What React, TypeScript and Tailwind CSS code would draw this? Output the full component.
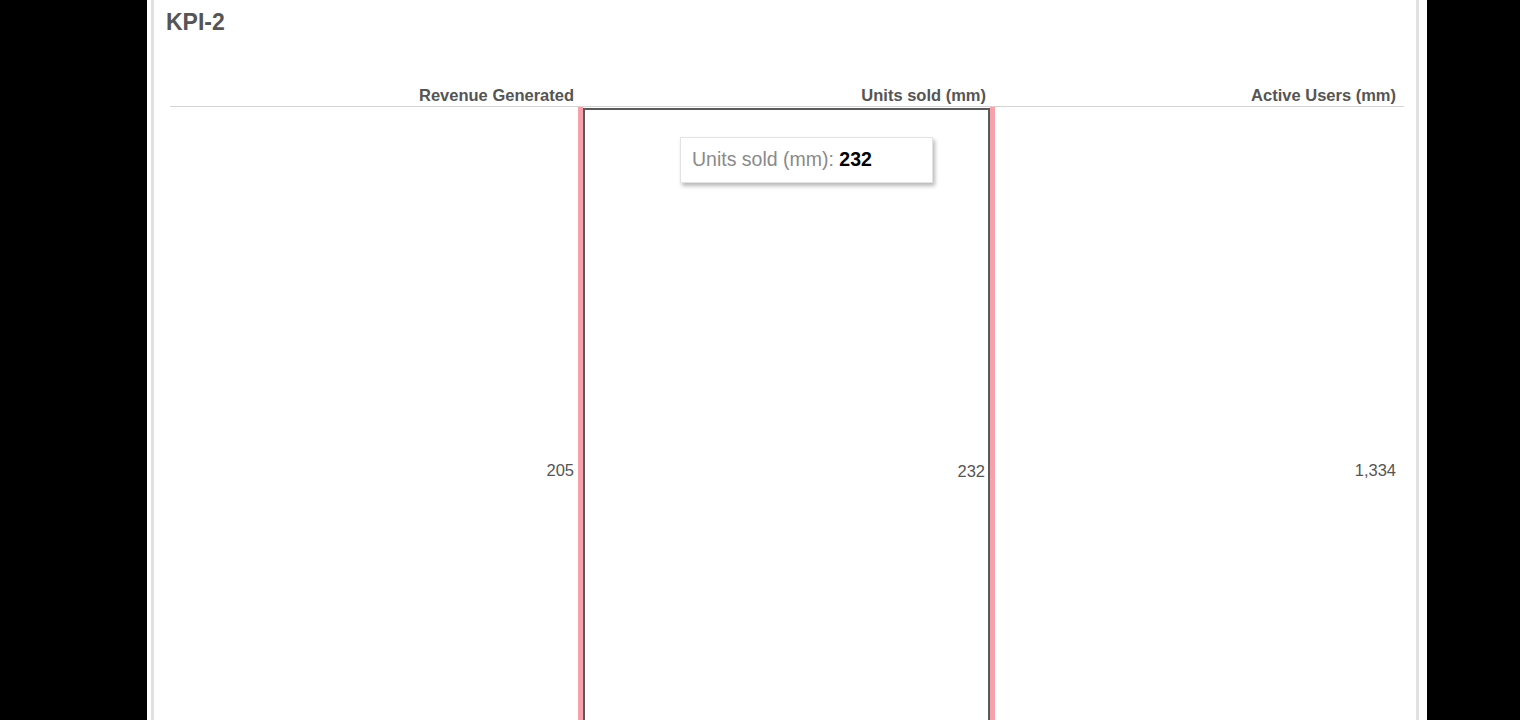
import React from "react";

const font = { fontFamily: '"Liberation Sans", Arial, sans-serif' };

export default function App() {
  return (
    <div className="w-[1520px] h-[720px] bg-black flex overflow-hidden" style={font}>
      <div className="w-[147px] shrink-0" />
      <div className="w-[1280px] shrink-0 bg-white pl-[4px] pr-[8px]">
        <div className="h-full border-x-[3px] border-[#e1e1e1] relative">
          <div className="pl-[12px] pt-[8px] h-[28px] text-[23px] leading-[28px] font-bold text-[#555]">KPI-2</div>
          <div className="ml-[16px] mr-[12px] mt-[57px]">
            {/* header row */}
            <div className="flex border-b border-[#d4d4d4] h-[22px] text-[16.5px] leading-[20px] font-bold text-[#555]">
              <div className="w-[408px] pr-[4px] text-right">Revenue Generated</div>
              <div className="w-[417px] pr-[9px] text-right">Units sold (mm)</div>
              <div className="flex-1 pr-[8px] text-right">Active Users (mm)</div>
            </div>
            {/* body row */}
            <div className="flex h-[726px] text-[16.5px] text-[#555]">
              <div className="w-[408px] pr-[4px] flex items-center justify-end">205</div>
              <div className="w-[417px] border-x-[5px] border-[#f7a1aa] pt-[1px] flex">
                <div className="flex-1 border-x-2 border-t-2 border-[#5a5a5a] pr-[3px] flex items-center justify-end">
                  232
                </div>
              </div>
              <div className="flex-1 pr-[8px] flex items-center justify-end">1,334</div>
            </div>
          </div>
          {/* tooltip */}
          <div className="absolute left-[526px] top-[137px] w-[253px] h-[46px] bg-white border border-[#e3e3e3] shadow-[2px_3px_4px_rgba(0,0,0,0.28)] flex items-center pl-[11px] text-[19.5px]">
            <span className="text-[#8a8a8a]">Units sold (mm):&nbsp;</span>
            <span className="font-bold text-black">232</span>
          </div>
        </div>
      </div>
    </div>
  );
}
